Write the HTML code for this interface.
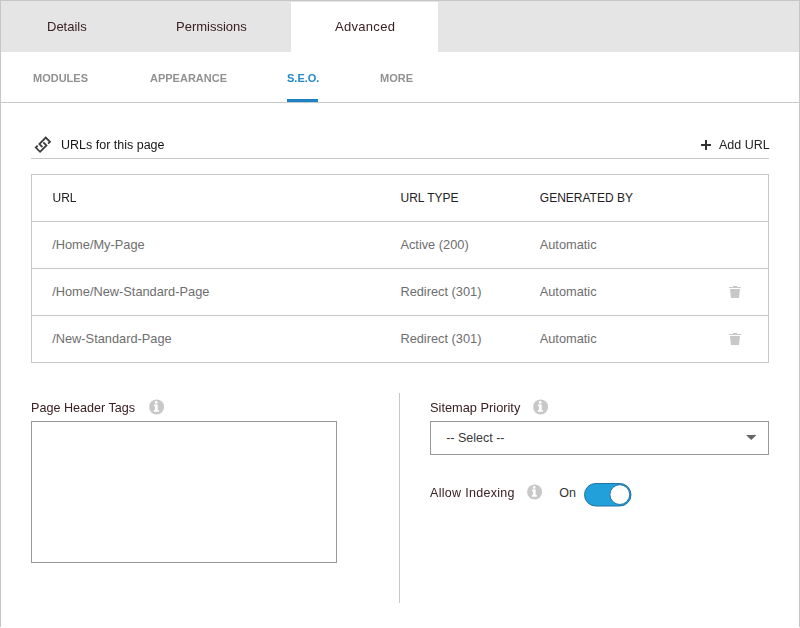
<!DOCTYPE html>
<html><head><meta charset="utf-8">
<style>
html,body{margin:0;padding:0;background:#fff;}
body{width:800px;height:628px;position:relative;overflow:hidden;font-family:"Liberation Sans",sans-serif;}
.a{position:absolute;}
.t{position:absolute;white-space:nowrap;}
.g{will-change:transform;}
.f13{font-size:13px;line-height:13px;}
.f12{font-size:12px;line-height:12px;}
.f125{font-size:12.5px;line-height:12.5px;}
.f128{font-size:12.8px;line-height:12.8px;}
.sub{font-size:11px;line-height:11px;font-weight:bold;color:#919191;}
.lbl{color:#3b2024;}
.hd{color:#222;}
.rw{color:#6e6e6e;}
</style></head><body>
<!-- outer frame -->
<div class="a" style="left:0;top:0;width:798px;height:626px;border:1px solid #c6c6c6;border-bottom:none;"></div>
<!-- tab bar -->
<div class="a" style="left:1px;top:1px;width:798px;height:51px;background:#e4e5e4;"></div>
<div class="a" style="left:291px;top:2px;width:147px;height:50px;background:#fff;"></div>
<div class="t g f13 lbl" style="left:46.6px;top:20px;">Details</div>
<div class="t g f13 lbl" style="left:175.6px;top:20px;">Permissions</div>
<div class="t g f13 lbl" style="left:335px;top:20px;letter-spacing:0.3px;">Advanced</div>
<!-- sub tabs -->
<div class="t g sub" style="left:32.5px;top:73px;">MODULES</div>
<div class="t g sub" style="left:149.7px;top:73px;">APPEARANCE</div>
<div class="t g sub" style="left:287px;top:73px;color:#2089c9;">S.E.O.</div>
<div class="t g sub" style="left:380.3px;top:73px;">MORE</div>
<div class="a" style="left:287px;top:99px;width:31px;height:3px;background:#1b82c5;"></div>
<div class="a" style="left:1px;top:102px;width:798px;height:1px;background:#c8c8c8;"></div>

<!-- URLs header -->
<svg class="a" style="left:0;top:0" width="60" height="160" viewBox="0 0 60 160">
<g transform="translate(42.9,144.7) rotate(-45)" fill="none" stroke="#3a3c3e" stroke-width="1.8" stroke-linejoin="miter">
<polyline points="-2,1.3 -2,-3 7,-3 7,3 4.4,3"/>
<polyline points="2,-1.3 2,3 -7,3 -7,-3 -4.4,-3"/>
</g></svg>
<div class="t g f125" style="left:60.8px;top:139.4px;color:#151515;">URLs for this page</div>
<div class="a" style="left:705px;top:140px;width:2px;height:10px;background:#333;"></div>
<div class="a" style="left:701px;top:144px;width:10px;height:2px;background:#333;"></div>
<div class="t g f125" style="left:718.7px;top:139.4px;color:#222;">Add URL</div>
<div class="a" style="left:31px;top:158px;width:738px;height:1px;background:#c8c8c8;"></div>

<!-- table -->
<div class="a" style="left:31px;top:174px;width:736px;height:187px;border:1px solid #c8c8c8;"></div>
<div class="a" style="left:32px;top:221px;width:736px;height:1px;background:#c8c8c8;"></div>
<div class="a" style="left:32px;top:268px;width:736px;height:1px;background:#c8c8c8;"></div>
<div class="a" style="left:32px;top:315px;width:736px;height:1px;background:#c8c8c8;"></div>

<div class="t f12 hd" style="left:52.5px;top:192px;">URL</div>
<div class="t f12 hd" style="left:400.5px;top:192px;">URL TYPE</div>
<div class="t f12 hd" style="left:539.8px;top:192px;">GENERATED BY</div>

<div class="t f128 rw" style="left:52.2px;top:239.4px;">/Home/My-Page</div>
<div class="t f128 rw" style="left:400.4px;top:239.4px;">Active (200)</div>
<div class="t f128 rw" style="left:539.7px;top:239.4px;">Automatic</div>

<div class="t f128 rw" style="left:52.2px;top:286.4px;">/Home/New-Standard-Page</div>
<div class="t f128 rw" style="left:400.4px;top:286.4px;">Redirect (301)</div>
<div class="t f128 rw" style="left:539.7px;top:286.4px;">Automatic</div>
<svg class="a" style="left:724px;top:281px" width="20" height="20" viewBox="724 281 20 20">
<g fill="#c8c8c8"><rect x="733" y="286" width="4" height="1"/><rect x="729" y="287" width="12" height="1"/><path d="M730 289H740L739 298H731Z"/></g></svg>

<div class="t f128 rw" style="left:52.2px;top:333.4px;">/New-Standard-Page</div>
<div class="t f128 rw" style="left:400.4px;top:333.4px;">Redirect (301)</div>
<div class="t f128 rw" style="left:539.7px;top:333.4px;">Automatic</div>
<svg class="a" style="left:724px;top:328px" width="20" height="20" viewBox="724 281 20 20">
<g fill="#c8c8c8"><rect x="733" y="286" width="4" height="1"/><rect x="729" y="287" width="12" height="1"/><path d="M730 289H740L739 298H731Z"/></g></svg>

<!-- bottom left -->
<div class="t g f128 lbl" style="left:30.6px;top:402.4px;font-size:12.6px;">Page Header Tags</div>
<svg class="a" style="left:149px;top:399px" width="16" height="16" viewBox="0 0 16 16">
<circle cx="7.6" cy="7.9" r="7.5" fill="#c8c8c8"/>
<g fill="#fff"><circle cx="7.2" cy="3.4" r="1.4"/><path d="M4.9 5.6H8.7V10.9H9.9V12.7H4.9V10.9H6.0V7.3H4.9Z"/></g>
</svg>
<div class="a" style="left:31px;top:421px;width:304px;height:140px;border:1px solid #999;"></div>

<div class="a" style="left:399px;top:393px;width:1px;height:210px;background:#c8c8c8;"></div>

<!-- bottom right -->
<div class="t g f128 lbl" style="left:429.7px;top:402.4px;">Sitemap Priority</div>
<svg class="a" style="left:533px;top:399px" width="16" height="16" viewBox="0 0 16 16">
<circle cx="7.6" cy="7.9" r="7.5" fill="#c8c8c8"/>
<g fill="#fff"><circle cx="7.2" cy="3.4" r="1.4"/><path d="M4.9 5.6H8.7V10.9H9.9V12.7H4.9V10.9H6.0V7.3H4.9Z"/></g>
</svg>
<div class="a" style="left:430px;top:421px;width:337px;height:32px;border:1px solid #999;"></div>
<div class="t f125" style="left:446.2px;top:432.4px;color:#3a3a3a;">-- Select --</div>
<svg class="a" style="left:746px;top:435px" width="11" height="5" viewBox="0 0 11 5"><path d="M0 0H10.5L5.25 5Z" fill="#666"/></svg>

<div class="t g f125 lbl" style="left:430px;top:487.4px;letter-spacing:0.3px;">Allow Indexing</div>
<svg class="a" style="left:527px;top:484px" width="16" height="16" viewBox="0 0 16 16">
<circle cx="7.6" cy="7.9" r="7.5" fill="#c8c8c8"/>
<g fill="#fff"><circle cx="7.2" cy="3.4" r="1.4"/><path d="M4.9 5.6H8.7V10.9H9.9V12.7H4.9V10.9H6.0V7.3H4.9Z"/></g>
</svg>
<div class="t f125" style="left:559.2px;top:487.4px;color:#333;">On</div>
<svg class="a" style="left:583px;top:482px" width="50" height="26" viewBox="0 0 50 26">
<rect x="1.5" y="1.5" width="46.5" height="22.5" rx="11.25" fill="#22a0da" stroke="#1f75a8" stroke-width="1"/>
<circle cx="36.8" cy="12.6" r="9.9" fill="#fff" stroke="#1f75a8" stroke-width="1"/>
</svg>
</body></html>
